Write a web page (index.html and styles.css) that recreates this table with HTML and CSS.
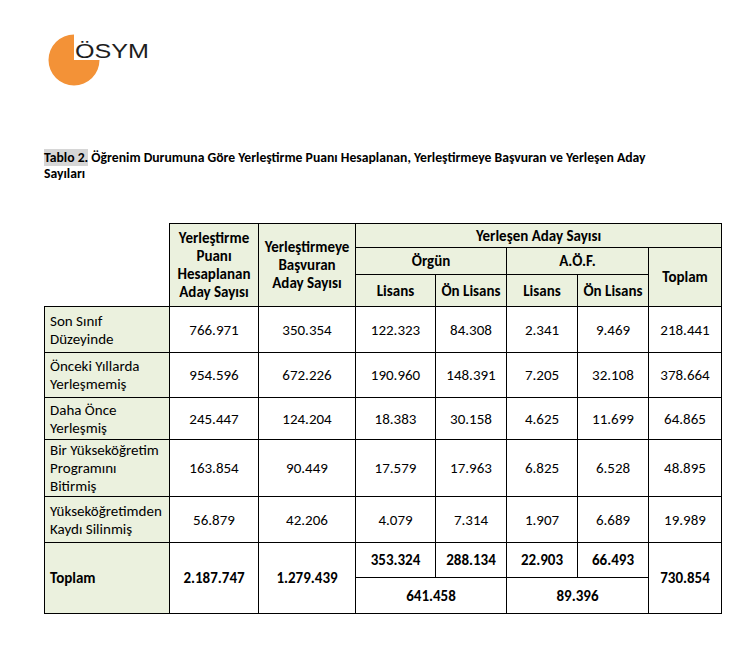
FILE: index.html
```html
<!DOCTYPE html>
<html lang="tr">
<head>
<meta charset="utf-8">
<title>Tablo 2</title>
<link rel="stylesheet" href="styles.css">
</head>
<body>
<div class="logo">
  <svg class="logo-mark" width="110" height="54" viewBox="0 0 110 54" aria-label="ÖSYM">
    <path d="M26 26 L26 0.5 A25.5 25.5 0 1 0 51.5 26 Z" fill="#f39237"/>
    <text x="27" y="23.5" font-family="Liberation Sans, Arial, sans-serif" font-size="20" fill="#1e1e1e" textLength="74" lengthAdjust="spacingAndGlyphs">ÖSYM</text>
  </svg>
</div>

<p class="caption"><span class="caption-no">Tablo 2.</span> Öğrenim Durumuna Göre Yerleştirme Puanı Hesaplanan, Yerleştirmeye Başvuran ve Yerleşen Aday Sayıları</p>

<table class="data">
  <colgroup>
    <col class="c-label">
    <col class="c-puan">
    <col class="c-basvuru">
    <col class="c-n1">
    <col class="c-n2">
    <col class="c-n2">
    <col class="c-n2">
    <col class="c-tot">
  </colgroup>
  <thead>
    <tr class="h1">
      <th class="blank" rowspan="3"></th>
      <th rowspan="3">Yerleştirme Puanı Hesaplanan Aday Sayısı</th>
      <th rowspan="3">Yerleştirmeye Başvuran Aday Sayısı</th>
      <th colspan="5">Yerleşen Aday Sayısı</th>
    </tr>
    <tr class="h2">
      <th colspan="2">Örgün</th>
      <th colspan="2">A.Ö.F.</th>
      <th rowspan="2">Toplam</th>
    </tr>
    <tr class="h3">
      <th>Lisans</th>
      <th>Ön Lisans</th>
      <th>Lisans</th>
      <th>Ön Lisans</th>
    </tr>
  </thead>
  <tbody>
    <tr class="r1">
      <th class="lbl">Son Sınıf Düzeyinde</th>
      <td>766.971</td><td>350.354</td><td>122.323</td><td>84.308</td><td>2.341</td><td>9.469</td><td>218.441</td>
    </tr>
    <tr class="r2">
      <th class="lbl">Önceki Yıllarda Yerleşmemiş</th>
      <td>954.596</td><td>672.226</td><td>190.960</td><td>148.391</td><td>7.205</td><td>32.108</td><td>378.664</td>
    </tr>
    <tr class="r3">
      <th class="lbl">Daha Önce Yerleşmiş</th>
      <td>245.447</td><td>124.204</td><td>18.383</td><td>30.158</td><td>4.625</td><td>11.699</td><td>64.865</td>
    </tr>
    <tr class="r4">
      <th class="lbl">Bir Yükseköğretim Programını Bitirmiş</th>
      <td>163.854</td><td>90.449</td><td>17.579</td><td>17.963</td><td>6.825</td><td>6.528</td><td>48.895</td>
    </tr>
    <tr class="r5">
      <th class="lbl">Yükseköğretimden Kaydı Silinmiş</th>
      <td>56.879</td><td>42.206</td><td>4.079</td><td>7.314</td><td>1.907</td><td>6.689</td><td>19.989</td>
    </tr>
    <tr class="t1 total">
      <th class="lbl" rowspan="2">Toplam</th>
      <td rowspan="2">2.187.747</td>
      <td rowspan="2">1.279.439</td>
      <td>353.324</td><td>288.134</td><td>22.903</td><td>66.493</td>
      <td rowspan="2">730.854</td>
    </tr>
    <tr class="t2 total">
      <td colspan="2">641.458</td>
      <td colspan="2">89.396</td>
    </tr>
  </tbody>
</table>
</body>
</html>
```

FILE: styles.css
```css
html, body {
  margin: 0;
  padding: 0;
  background: #ffffff;
}

body {
  font-family: Carlito, Calibri, Lato, "Liberation Sans", sans-serif;
  color: #000000;
  width: 739px;
}

.logo {
  padding: 34px 0 0 48px;
  height: 54px;
}

.logo-mark {
  display: block;
}

.caption {
  margin: 62px 0 0 44px;
  width: 618px;
  font-size: 13.7px;
  line-height: 16px;
  font-weight: 700;
}

.caption-no {
  background: #d6d6d6;
}

.data {
  margin: 41px 0 0 44px;
  border-collapse: collapse;
  table-layout: fixed;
  width: 677px;
  font-size: 15px;
  line-height: 18px;
}

.c-label { width: 125px; }
.c-puan { width: 89px; }
.c-basvuru { width: 97px; }
.c-n1 { width: 80px; }
.c-n2 { width: 71px; }
.c-tot { width: 73px; }

.data th,
.data td {
  border: 1px solid #000000;
  padding: 0 5px;
  vertical-align: middle;
  text-align: center;
}

.data thead th {
  background: #ebf1de;
  font-weight: 700;
}

.data thead th.blank {
  background: transparent;
  border-top: none;
  border-left: none;
}

.data th.lbl {
  background: #ebf1de;
  text-align: left;
  font-weight: 400;
}

.data .total th.lbl,
.data .total td {
  font-weight: 700;
}

.h1 { height: 24px; }
.h2 { height: 27px; }
.h3 { height: 32px; }
.r1 { height: 46px; }
.r2 { height: 45px; }
.r3 { height: 42px; }
.r4 { height: 57px; }
.r5 { height: 46px; }
.t1 { height: 35px; }
.t2 { height: 36px; }
```
